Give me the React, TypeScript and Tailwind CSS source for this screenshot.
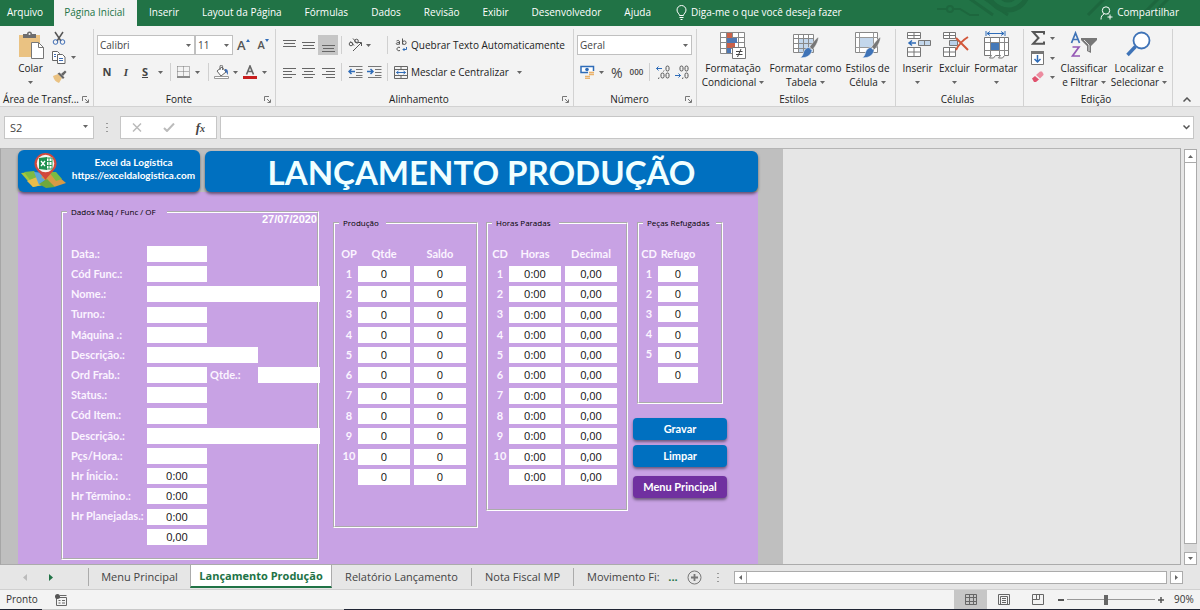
import type { ReactNode } from "react";

const Caret = ({ className = "" }: { className?: string }) => (
  <svg className={`h-[3px] w-[5px] shrink-0 ${className}`} viewBox="0 0 5 3" fill="#666">
    <path d="M0 0h5L2.5 3z" />
  </svg>
);

const Divider = () => <span className="h-[18px] w-px shrink-0 bg-[#d0d0d0]" />;

/* ---------- Title bar ---------- */

const menuTabs = [
  "Arquivo",
  "Página Inicial",
  "Inserir",
  "Layout da Página",
  "Fórmulas",
  "Dados",
  "Revisão",
  "Exibir",
  "Desenvolvedor",
  "Ajuda",
];

const MenuBar = () => (
  <header className="relative flex h-[26px] shrink-0 items-stretch overflow-hidden bg-[#217346] text-[10px] text-white">
    <svg
      className="absolute top-0 right-0 h-[26px] w-[270px]"
      viewBox="0 0 270 26"
      fill="none"
      stroke="#1d673e"
      strokeWidth="3"
    >
      <path d="M7 9h9M24 9h6l10 6h9" strokeWidth="2" />
      <circle cx="20" cy="9" r="3" strokeWidth="2" />
      <path d="M33 -6l30 21M48 -6l30 21" />
      <circle cx="78" cy="-10" r="20" strokeWidth="5" />
      <circle cx="78" cy="-8" r="9" />
      <path d="M158 15l20-20M212 15l20-20M222 15l20-20" />
    </svg>
    <nav className="relative flex">
      {menuTabs.map((tab, i) => (
        <button
          key={tab}
          className={
            i === 0
              ? "w-[54px] pr-1 pb-px text-center"
              : i === 1
                ? "w-[83px] bg-[#f3f3f3] pr-[2px] pb-px text-center text-[#217346]"
                : "pr-[11px] pb-px pl-3"
          }
        >
          {tab}
        </button>
      ))}
    </nav>
    <button className="relative ml-[14px] flex items-center gap-1 pb-px">
      <svg className="h-[15px] w-[11px]" viewBox="0 0 11 15" fill="none" stroke="#fff">
        <path d="M3.5 10.5C3.5 8.5 1 8 1 5a4.5 4.5 0 0 1 9 0c0 3-2.500 3.500-2.500 5.500zM3.500 12.500h4M4.500 14.500h2" />
      </svg>
      Diga-me o que você deseja fazer
    </button>
    <button className="relative mr-[21px] ml-auto flex items-center gap-1 pb-px">
      <svg className="h-[14px] w-[13px]" viewBox="0 0 13 14" fill="none" stroke="#fff">
        <circle cx="6" cy="4.500" r="3.700" />
        <path d="M1 13.500c0-3 1-4.500 3-5.500M8 8.500l.5.500M7.500 11h5M10 8.500v5" />
      </svg>
      Compartilhar
    </button>
  </header>
);

/* ---------- Ribbon icons ---------- */

const PasteIcon = () => (
  <svg className="h-7 w-7" viewBox="0 0 28 28">
    <path d="M2 4h21v22H2z" fill="#eac282" />
    <path d="M6 3h4a2.500 2.500 0 0 1 5 0h4v4H6z" fill="#6d6d6d" />
    <circle cx="12.500" cy="3" r="1" fill="#f3f3f3" />
    <path d="M14.500 11.500h7l5 5v11h-12z" fill="#fff" stroke="#777" />
    <path d="M21.500 11.500v5h5" fill="none" stroke="#777" />
  </svg>
);

const CutIcon = () => (
  <svg className="h-[14px] w-[14px]" viewBox="0 0 14 14" fill="none">
    <path d="M3 1l6 9M11 1L5 10" stroke="#555" strokeWidth="1.500" />
    <circle cx="3.500" cy="11" r="2.300" stroke="#3e6db5" />
    <circle cx="10.500" cy="11" r="2.300" stroke="#3e6db5" />
  </svg>
);

const CopyIcon = () => (
  <svg className="h-[13px] w-[14px]" viewBox="0 0 14 13" fill="#fff" stroke="#666">
    <path d="M.5.500h5l2 2v7h-7z" />
    <path d="M5.500 3.500h5l2.500 2.500v6.500H5.500z" />
    <path d="M2 3.500h2M2 5.500h2M7 7.500h4M7 9.500h4" stroke="#3e6db5" />
  </svg>
);

const BrushIcon = () => (
  <svg className="h-[13px] w-[15px]" viewBox="0 0 15 13">
    <path d="M1 6l5-2 4 4-3 5c-3-1-5-3-6-7z" fill="#eac282" />
    <path d="M5.500 3.500l2-1 5 5-1.500 1.500z" fill="#666" />
    <path d="M9 4l4-3.500L14.500 2 11 6z" fill="#666" />
  </svg>
);

const BordersIcon = () => (
  <svg className="h-3 w-[13px]" viewBox="0 0 13 12" fill="none" stroke="#777">
    <path d="M.5.500h12M.5 5.500h12M.5.500v10M6.500.500v10M12.500.500v10" strokeDasharray="1 1" />
    <path d="M0 11h13" stroke="#666" strokeWidth="1.500" />
  </svg>
);

const FillIcon = () => (
  <svg className="h-[14px] w-[15px]" viewBox="0 0 15 14">
    <path d="M3 6l5-4 4 5-5 4z" fill="#fff" stroke="#666" />
    <path d="M6 5V1.500a1.300 1.300 0 0 1 2.600 0V5" fill="none" stroke="#666" />
    <path d="M11 4c3 0 3 2 3 6-1-1-1.500-3-3-3.500z" fill="#3e6db5" />
    <path d="M.5 11.500h14v2H.5z" fill="#fff" stroke="#999" />
  </svg>
);

const FontColorIcon = () => (
  <svg className="h-[14px] w-[14px]" viewBox="0 0 14 14">
    <path d="M3.500 9.500L7 1l3.500 8.500M4.800 6.500h4.400" fill="none" stroke="#666" strokeWidth="1.600" />
    <path d="M0 11h14v3H0z" fill="#c81e1e" />
  </svg>
);

const LinesIcon = ({ rows }: { rows: string }) => (
  <svg className="h-[13px] w-[13px]" viewBox="0 0 13 13" stroke="#666" fill="none">
    <path d={rows} />
  </svg>
);

const OrientationIcon = () => (
  <svg className="h-[14px] w-[15px]" viewBox="0 0 15 14" fill="none" stroke="#555">
    <circle cx="3" cy="6" r="1.800" />
    <path d="M2.500 3.500l3.500 4M5 .5l4.500 5" />
    <circle cx="8.500" cy="3" r="1.800" />
    <path d="M5 13l8-8M10 4.500h3.500V8" />
  </svg>
);

const IndentIcon = ({ right = false }: { right?: boolean }) => (
  <svg className="h-3 w-[15px]" viewBox="0 0 15 12" fill="none">
    <path d="M1 .5h13.500M8 3.500h6.500M8 6.500h6.500M8 9.500h6.500M1 11.500h13.500" stroke="#777" />
    <path
      d={right ? "M0 5.500h6M3.500 3L6 5.500 3.500 8" : "M1 5.500h6M3.500 3L1 5.500 3.500 8"}
      stroke="#2f6cb8"
      strokeWidth="1.500"
    />
  </svg>
);

const WrapIcon = () => (
  <svg className="h-[14px] w-[13px]" viewBox="0 0 13 14" fill="none" stroke="#555">
    <path d="M1.500 3c2-1 3-.5 3 1v2.500M4.500 4.500c-4 0-4 2-2 2 1 0 2-.5 2-1.500M7.500.500v6" />
    <circle cx="9.300" cy="4.700" r="1.800" />
    <path d="M5 9.500c-4-1.500-4 4.500 0 3" />
    <path d="M11.500 9v2.500H8M9.500 10L8 11.500 9.500 13" stroke="#2f6cb8" />
  </svg>
);

const MergeIcon = () => (
  <svg className="h-[13px] w-[14px]" viewBox="0 0 14 13" fill="none">
    <path d="M.5.500h13v12H.5zM.5 3.500h13M.5 9.500h13M7 .5v3M7 9.500v3" stroke="#666" />
    <path d="M2.500 6.500h9M4.500 5L2.500 6.500 4.500 8M9.500 5l2 1.500-2 1.500" stroke="#2f6cb8" />
  </svg>
);

const MoneyIcon = () => (
  <svg className="h-[14px] w-[15px]" viewBox="0 0 15 14">
    <path d="M1 1.500h12.500v6H1z" fill="#fff" stroke="#2f6cb8" strokeWidth="1.500" />
    <circle cx="7" cy="4.500" r="1.800" fill="#2f6cb8" />
    <path d="M8 6h7v8H4v-4h4z" fill="#f3f3f3" />
    <path d="M9 7.500h5M9 9.500h5M5 11.500h5M5 13.500h5" stroke="#eab26c" strokeWidth="1.300" />
  </svg>
);

const DecimalIcon = ({ less = false }: { less?: boolean }) => (
  <svg className="h-[14px] w-[14px]" viewBox="0 0 14 14" fill="none" stroke="#555">
    {less ? (
      <>
        <rect x="5" y="1" width="3" height="5" rx="1.500" />
        <rect x="10" y="1" width="3" height="5" rx="1.500" />
        <rect x="10" y="8" width="3" height="5" rx="1.500" />
        <path d="M8 12.500l-.5 1.500" />
        <path d="M0 10.500h5.500M3.500 8.500l2 2-2 2" stroke="#2f6cb8" />
      </>
    ) : (
      <>
        <rect x="10" y="1" width="3" height="5" rx="1.500" />
        <rect x="5" y="8" width="3" height="5" rx="1.500" />
        <rect x="10" y="8" width="3" height="5" rx="1.500" />
        <path d="M3 12.500l-.5 1.500M8 5.500l-.5 1" />
        <path d="M.5 3.500H6M2.500 1.500l-2 2 2 2" stroke="#2f6cb8" />
      </>
    )}
  </svg>
);

const CondFormatIcon = () => (
  <svg className="h-7 w-7" viewBox="0 0 28 28">
    <path d="M1.500 1.500h24v21h-24z" fill="#fff" />
    <path d="M1.500 1.500h24v21h-24zM7.500 1.500v21M13.500 1.500v21M19.500 1.500v21M1.500 6.500h24M1.500 11.500h24M1.500 17.500h24" fill="none" stroke="#888" />
    <path d="M8 2h5v5H8zM8 12h8v5H8z" fill="#c9614a" />
    <path d="M8 7h10v5H8zM8 17h4v5H8z" fill="#4f78b3" />
    <path d="M13.500 16.500h13v11h-13z" fill="#fff" stroke="#777" />
    <path d="M17 20.500h6.500M17 23.500h6.500M22 18l-3.500 8" stroke="#444" fill="none" />
  </svg>
);

const PaintBrush = () => (
  <>
    <path d="M26.500 6c-2 1-7 7-9 10l3 2.500c3-3 6-8 6-12.500z" fill="#777" stroke="#fff" strokeWidth=".5" />
    <path d="M17 16.500l3 3c-1 5-6 8-12 7 3-1 3-4 4-6.500 1-2 3-3.500 5-3.500z" fill="#3f73b7" stroke="#fff" strokeWidth=".5" />
  </>
);

const TableFormatIcon = () => (
  <svg className="h-7 w-7" viewBox="0 0 28 28">
    <path d="M1.500 3.500h20v18h-20z" fill="#fff" />
    <path d="M6 8h15.500v13.500H6z" fill="#c3d7ec" />
    <path d="M1.500 3.500h20v18h-20zM6.500 3.500v18M11.500 3.500v18M16.500 3.500v18M1.500 7.500h20M1.500 12.500h20M1.500 17.500h20" fill="none" stroke="#888" />
    <PaintBrush />
  </svg>
);

const CellStyleIcon = () => (
  <svg className="h-7 w-7" viewBox="0 0 28 28">
    <path d="M1.500 1.500h22v20h-22z" fill="#fff" stroke="#888" />
    <path d="M6 7h13v9H6z" fill="#c3d7ec" />
    <path d="M5.500 1.500v20M19.500 1.500v20M1.500 6.500h22M1.500 16.500h22" fill="none" stroke="#999" />
    <PaintBrush />
  </svg>
);

const InsertCellsIcon = () => (
  <svg className="h-7 w-7" viewBox="0 0 28 28" fill="#fff" stroke="#777">
    <path d="M3.500 1.500h13v6h-13zM3.500 4.500h13M10 1.500v6M3.500 16.500h13v9h-13zM3.500 21h13M10 16.500v9" />
    <path d="M14.500 9.500h12v5h-12zM20.500 9.500v5" fill="#c3d7ec" />
    <path d="M5 12h7M8 9.500L5 12l3 2.500" fill="none" stroke="#2f6cb8" strokeWidth="1.500" />
  </svg>
);

const DeleteCellsIcon = () => (
  <svg className="h-7 w-7" viewBox="0 0 28 28" fill="#fff" stroke="#777">
    <path d="M2.500 1.500h12v6h-12zM2.500 4.500h12M8.500 1.500v6M2.500 16.500h12v9h-12zM2.500 21h12M8.500 16.500v9" />
    <path d="M8.500 9.500h8v5h-8z" fill="#b9d0ea" />
    <path d="M15 7l12 12M27 6c-5 3-9 7-12 13" fill="none" stroke="#d2573a" strokeWidth="2" />
  </svg>
);

const FormatCellsIcon = () => (
  <svg className="h-7 w-7" viewBox="0 0 28 28" fill="none">
    <path d="M4 0v5M23 0v5M5 2.500h17M8 .5l-3 2 3 2M19 .5l3 2-3 2" stroke="#2f6cb8" />
    <path d="M2.500 6.500h24v18l-4 0-2 2.500h-4l2-2.500h-5l-2 2.500h-4l2-2.500h-7z" fill="#fff" stroke="#777" />
    <path d="M8.500 6.500v18M17.500 6.500v18M22.500 6.500v18M2.500 11.500h24M2.500 19.500h24" stroke="#888" />
    <path d="M9 12h8v7H9z" fill="#4579b8" />
  </svg>
);

const SumIcon = () => (
  <svg className="h-[14px] w-[14px]" viewBox="0 0 14 14" fill="none" stroke="#555" strokeWidth="2">
    <path d="M13 3.500V1H2l5.500 6L2 12.800h11V10.500" />
  </svg>
);

const FillDownIcon = () => (
  <svg className="h-[14px] w-[14px]" viewBox="0 0 14 14" fill="none">
    <path d="M.5.500h12v13H.5z" fill="#fff" stroke="#777" />
    <path d="M0 0h13v3H0z" fill="#777" />
    <path d="M6.500 4v7M3.500 8l3 3 3-3" stroke="#2f6cb8" strokeWidth="1.500" />
  </svg>
);

const EraserIcon = () => (
  <svg className="h-3 w-[13px]" viewBox="0 0 13 12">
    <path d="M1 7.500l3-2.500 4 3.500-3 2.500H3z" fill="#e0526e" />
    <path d="M5 4l4-3.500h2l1.500 2.500v1L9 7.500z" fill="#ec8b9f" />
  </svg>
);

const SortIcon = () => (
  <svg className="h-7 w-7" viewBox="0 0 28 28" fill="none">
    <path d="M1.500 12L5.500 2l4 10M3 8.500h5" stroke="#3f73b7" strokeWidth="1.700" />
    <path d="M2.500 16h6.500L2.500 25H10" stroke="#9558b5" strokeWidth="1.700" />
    <path d="M11 7h16v2l-6 6v7l-4-2v-5l-6-6z" fill="#777" />
    <path d="M14 9l5 5v6" stroke="#ddd" />
  </svg>
);

const FindIcon = () => (
  <svg className="h-7 w-7" viewBox="0 0 28 28" fill="none">
    <circle cx="16.500" cy="9.500" r="8" fill="#fff" stroke="#3f73b7" strokeWidth="1.800" />
    <path d="M10.500 15.500L2.500 24" stroke="#3f73b7" strokeWidth="3.500" />
  </svg>
);

const LaunchIcon = () => (
  <svg className="h-[7px] w-[7px]" viewBox="0 0 7 7" fill="none" stroke="#777">
    <path d="M.5 5V.5H5M3 3l3 3M6.500 3.500v3h-3" />
  </svg>
);

/* ---------- Ribbon ---------- */

type GroupProps = {
  label: string;
  className: string;
  launcher?: boolean;
  children: ReactNode;
};

const Group = ({ label, className, launcher, children }: GroupProps) => (
  <section className={`flex shrink-0 flex-col border-r border-[#d2d2d2] pb-px ${className}`}>
    <div className="flex-1">{children}</div>
    <div className="flex h-3 items-center pr-1">
      <span className="flex-1 text-center leading-3 whitespace-nowrap">{label}</span>
      {launcher && (
        <button aria-label={`Opções de ${label}`}>
          <LaunchIcon />
        </button>
      )}
    </div>
  </section>
);

type BigButtonProps = {
  icon: ReactNode;
  lines: string[];
  className: string;
};

const BigButton = ({ icon, lines, className }: BigButtonProps) => (
  <button className={`flex shrink-0 flex-col items-center pt-[2px] leading-[14px] whitespace-nowrap ${className}`}>
    {icon}
    <span className="mt-[2px]">{lines[0]}</span>
    <span className="flex h-[14px] items-center gap-[3px]">
      {lines[1]}
      <Caret />
    </span>
  </button>
);

const Dropdown = ({ label, value, className }: { label: string; value: string; className: string }) => (
  <div className={`relative ${className}`}>
    <select
      aria-label={label}
      className="h-5 w-full appearance-none border border-[#c0c0c0] bg-white pl-[2px] leading-4 text-[#444]"
    >
      <option>{value}</option>
    </select>
    <Caret className="pointer-events-none absolute top-[9px] right-1" />
  </div>
);

const Ribbon = () => (
  <div className="flex h-[81px] shrink-0 overflow-hidden border-b border-[#d2d2d2] bg-[#f3f3f3] pt-[3px] text-[10px] text-[#222]">
    <Group label="Área de Transf..." className="w-[94px]" launcher>
      <div className="flex">
        <BigButton icon={<PasteIcon />} lines={["Colar"]} className="ml-3 w-[37px]" />
        <div className="flex flex-col gap-[6px] pt-[2px] pl-[3px]">
          <button aria-label="Recortar">
            <CutIcon />
          </button>
          <button aria-label="Copiar" className="flex items-center gap-[5px]">
            <CopyIcon />
            <Caret />
          </button>
          <button aria-label="Pincel de Formatação">
            <BrushIcon />
          </button>
        </div>
      </div>
    </Group>

    <Group label="Fonte" className="w-[182px]" launcher>
      <div className="flex flex-col gap-[7px] pt-[6px] pl-[3px]">
        <div className="flex items-center">
          <Dropdown label="Fonte" value="Calibri" className="w-[98px]" />
          <Dropdown label="Tamanho" value="11" className="w-[38px]" />
          <button aria-label="Aumentar fonte" className="relative ml-1 text-[13px] leading-5 font-semibold text-[#555]">
            A
            <svg className="absolute top-1 -right-1 h-[3px] w-1" viewBox="0 0 4 3" fill="#2f6cb8">
              <path d="M0 3h4L2 0z" />
            </svg>
          </button>
          <button aria-label="Diminuir fonte" className="relative ml-3 text-[11px] leading-5 font-semibold text-[#555]">
            A
            <svg className="absolute top-1 -right-1 h-[3px] w-1" viewBox="0 0 4 3" fill="#2f6cb8">
              <path d="M0 0h4L2 3z" />
            </svg>
          </button>
        </div>
        <div className="flex h-5 items-center text-[11px] text-[#444]">
          <button className="w-5 font-bold">N</button>
          <button className="w-[18px] font-['Liberation_Serif',serif] font-bold italic">I</button>
          <button className="w-5 font-bold underline">S</button>
          <Caret className="mr-[7px] ml-[3px]" />
          <Divider />
          <button aria-label="Bordas" className="mr-2 ml-[6px] flex items-center gap-[5px]">
            <BordersIcon />
            <Caret />
          </button>
          <Divider />
          <button aria-label="Cor de preenchimento" className="ml-[5px] flex items-center gap-1">
            <FillIcon />
            <Caret />
          </button>
          <button aria-label="Cor da fonte" className="ml-[5px] flex items-center gap-[5px]">
            <FontColorIcon />
            <Caret />
          </button>
        </div>
      </div>
    </Group>

    <Group label="Alinhamento" className="w-[298px]" launcher>
      <div className="flex flex-col gap-[7px] pt-[6px] pl-1">
        <div className="flex h-5 items-center">
          <button aria-label="Alinhar em cima" className="flex w-[19px] justify-center">
            <LinesIcon rows="M0 1.500h13M1 4.500h11M0 7.500h13" />
          </button>
          <button aria-label="Alinhar no meio" className="flex w-[19px] justify-center">
            <LinesIcon rows="M0 3.500h13M1 6.500h11M0 9.500h13" />
          </button>
          <button aria-label="Alinhar embaixo" className="flex h-5 w-5 items-center justify-center bg-[#c6c6c6]">
            <LinesIcon rows="M0 6.500h13M1 9.500h11M0 12.500h13" />
          </button>
          <span className="w-[3px]" />
          <Divider />
          <button aria-label="Orientação" className="ml-[6px] flex items-center gap-[3px]">
            <OrientationIcon />
            <Caret />
          </button>
          <span className="w-4" />
          <Divider />
          <button className="ml-[7px] flex items-center gap-[3px] whitespace-nowrap">
            <WrapIcon />
            Quebrar Texto Automaticamente
          </button>
        </div>
        <div className="flex h-5 items-center">
          <button aria-label="Alinhar à esquerda" className="flex w-[19px] justify-center">
            <LinesIcon rows="M0 2.500h13M0 5.500h9M0 8.500h13M0 11.500h9" />
          </button>
          <button aria-label="Centralizar" className="flex w-[19px] justify-center">
            <LinesIcon rows="M0 2.500h13M2 5.500h9M0 8.500h13M2 11.500h9" />
          </button>
          <button aria-label="Alinhar à direita" className="flex w-5 justify-center">
            <LinesIcon rows="M0 2.500h13M4 5.500h9M0 8.500h13M4 11.500h9" />
          </button>
          <span className="w-[3px]" />
          <Divider />
          <button aria-label="Diminuir recuo" className="ml-[6px]">
            <IndentIcon />
          </button>
          <button aria-label="Aumentar recuo" className="ml-1">
            <IndentIcon right />
          </button>
          <span className="w-[5px]" />
          <Divider />
          <button className="ml-[6px] flex items-center gap-[3px] whitespace-nowrap">
            <MergeIcon />
            Mesclar e Centralizar
            <Caret className="ml-[5px]" />
          </button>
        </div>
      </div>
    </Group>

    <Group label="Número" className="w-[123px]" launcher>
      <div className="flex flex-col gap-[7px] pt-[6px] pl-[3px]">
        <Dropdown label="Formato de número" value="Geral" className="w-[115px]" />
        <div className="flex h-5 items-center pl-[3px]">
          <button aria-label="Formato de contabilização" className="flex items-center gap-1">
            <MoneyIcon />
            <Caret />
          </button>
          <button className="ml-[7px] text-[14px] text-[#444]">%</button>
          <button className="ml-[7px] text-[8px] font-semibold text-[#444]">000</button>
          <span className="w-[6px]" />
          <Divider />
          <button aria-label="Aumentar casas decimais" className="ml-[6px]">
            <DecimalIcon />
          </button>
          <button aria-label="Diminuir casas decimais" className="ml-[5px]">
            <DecimalIcon less />
          </button>
        </div>
      </div>
    </Group>

    <Group label="Estilos" className="w-[199px]">
      <div className="flex pl-[2px]">
        <BigButton icon={<CondFormatIcon />} lines={["Formatação", "Condicional"]} className="w-[68px]" />
        <BigButton icon={<TableFormatIcon />} lines={["Formatar como", "Tabela"]} className="w-[77px]" />
        <BigButton icon={<CellStyleIcon />} lines={["Estilos de", "Célula"]} className="w-[47px]" />
      </div>
    </Group>

    <Group label="Células" className="w-[128px]">
      <div className="flex pl-[3px]">
        <BigButton icon={<InsertCellsIcon />} lines={["Inserir"]} className="w-[37px]" />
        <BigButton icon={<DeleteCellsIcon />} lines={["Excluir"]} className="w-[37px]" />
        <BigButton icon={<FormatCellsIcon />} lines={["Formatar"]} className="w-[46px]" />
      </div>
    </Group>

    <Group label="Edição" className="w-[149px]">
      <div className="flex pl-[7px]">
        <div className="flex flex-col gap-[6px] pt-[2px]">
          <button aria-label="Soma" className="flex items-center gap-[5px]">
            <SumIcon />
            <Caret />
          </button>
          <button aria-label="Preencher" className="flex items-center gap-[5px]">
            <FillDownIcon />
            <Caret />
          </button>
          <button aria-label="Limpar formatos" className="flex items-center gap-[6px]">
            <EraserIcon />
            <Caret />
          </button>
        </div>
        <BigButton icon={<SortIcon />} lines={["Classificar", "e Filtrar"]} className="ml-1 w-[50px]" />
        <BigButton icon={<FindIcon />} lines={["Localizar e", "Selecionar"]} className="ml-px w-[58px]" />
      </div>
    </Group>

    <button aria-label="Recolher a faixa" className="mt-auto mr-[9px] mb-1 ml-auto">
      <svg className="h-[5px] w-2" viewBox="0 0 8 5" fill="none" stroke="#555" strokeWidth="1.500">
        <path d="M.5 4.500L4 1l3.500 3.500" />
      </svg>
    </button>
  </div>
);

/* ---------- Formula bar ---------- */

const DotsHandle = () => (
  <svg className="h-[9px] w-[2px] shrink-0" viewBox="0 0 2 9" fill="#999">
    <path d="M0 0h2v1H0zM0 4h2v1H0zM0 8h2v1H0z" />
  </svg>
);

const FormulaBar = () => (
  <div className="flex h-[41px] shrink-0 items-center bg-[#e6e6e6] pr-[6px] pl-1 text-[11px] text-[#444]">
    <div className="relative w-[90px]">
      <input
        aria-label="Caixa de nome"
        defaultValue="S2"
        className="h-[23px] w-full border border-[#c6c6c6] bg-white pl-[5px]"
      />
      <Caret className="absolute top-[9px] right-[6px]" />
    </div>
    <span className="flex w-[26px] justify-center">
      <DotsHandle />
    </span>
    <div className="flex h-[23px] w-[97px] items-center justify-between border border-[#c6c6c6] bg-white px-[11px]">
      <button aria-label="Cancelar">
        <svg className="h-[9px] w-[10px]" viewBox="0 0 10 9" fill="none" stroke="#bbb" strokeWidth="1.500">
          <path d="M1 .5l8 8M9 .5l-8 8" />
        </svg>
      </button>
      <button aria-label="Inserir">
        <svg className="h-[9px] w-3" viewBox="0 0 12 9" fill="none" stroke="#bbb" strokeWidth="2">
          <path d="M1 5l3 3 7-7.500" />
        </svg>
      </button>
      <button className="font-['Liberation_Serif',serif] text-[13px] font-bold italic">
        f<span className="text-[10px]">x</span>
      </button>
    </div>
    <div className="relative ml-[3px] flex-1">
      <input aria-label="Barra de fórmulas" className="h-[23px] w-full border border-[#c6c6c6] bg-white px-2" />
      <svg
        className="absolute top-[9px] right-1 h-[5px] w-[7px]"
        viewBox="0 0 7 5"
        fill="none"
        stroke="#555"
        strokeWidth="1.500"
      >
        <path d="M.5.500l3 3 3-3" />
      </svg>
    </div>
  </div>
);

/* ---------- Worksheet ---------- */

const LogoIcon = () => (
  <svg className="h-9 w-[46px] shrink-0" viewBox="0 0 46 36">
    <path d="M0 20l13-1 9 13-10 2z" fill="#a8c63c" />
    <path d="M3 19l10-1 5 6-9 3z" fill="#7dbb42" />
    <path d="M6 28l10-4 5 8-9 2z" fill="#e8bc4a" />
    <path d="M13 19l10 1 4 5-9 7z" fill="#5aa7d8" />
    <path d="M20 24l12-5 13 11-12 4z" fill="#d89a45" />
    <path d="M28 19l7 0 6 7-6 2z" fill="#7dbb42" />
    <path d="M18 31l8-5 8 8-9 1z" fill="#6fa83b" />
    <path d="M24.500 27C20 20 13.500 17 13.500 11a11 11 0 0 1 22 0c0 6-6.500 9-11 16z" fill="#d2483c" />
    <circle cx="24.500" cy="10.500" r="8.700" fill="#f5f5f0" />
    <path d="M25 5h6v11h-6z" fill="#fff" stroke="#2e9e58" />
    <path d="M28 5v11M25 8.500h6M25 12.500h6" stroke="#2e9e58" />
    <path d="M18 5l8-1v13l-8-1z" fill="#1f9150" />
    <path d="M20 8l4 5M24 8l-4 5" stroke="#fff" strokeWidth="1.300" />
  </svg>
);

type Field = {
  id: string;
  label: string;
  size: "sm" | "md" | "lg";
  value?: string;
};

const fields: Field[] = [
  { id: "data", label: "Data.:", size: "sm" },
  { id: "cod-func", label: "Cód Func.:", size: "sm" },
  { id: "nome", label: "Nome.:", size: "lg" },
  { id: "turno", label: "Turno.:", size: "sm" },
  { id: "maquina", label: "Máquina .:", size: "sm" },
  { id: "descricao", label: "Descrição.:", size: "md" },
  { id: "ord-fab", label: "Ord Frab.:", size: "sm" },
  { id: "status", label: "Status.:", size: "sm" },
  { id: "cod-item", label: "Cód Item.:", size: "sm" },
  { id: "descricao-item", label: "Descrição.:", size: "lg" },
  { id: "pcs-hora", label: "Pçs/Hora.:", size: "sm" },
  { id: "hr-inicio", label: "Hr Ínicio.:", size: "sm", value: "0:00" },
  { id: "hr-termino", label: "Hr Término.:", size: "sm", value: "0:00" },
  { id: "hr-planejadas", label: "Hr Planejadas.:", size: "sm", value: "0:00" },
  { id: "total", label: "", size: "sm", value: "0,00" },
];

const fieldWidth = {
  sm: "w-[60px]",
  md: "w-[111px]",
  lg: "w-[173px]",
};

const inputStyle = "h-4 bg-white text-center text-[11px] leading-4 text-[#111]";
const sheetLabel = "font-['Lato',sans-serif] text-[11px] font-bold text-[#fbf4ff]";
const frame = "min-w-0 shrink-0 border-2 border-white [border-style:groove]";
const legendStyle = "ml-1 pl-1 text-[8px] leading-[10px] whitespace-nowrap text-black";

const MachineData = () => (
  <fieldset className={`h-[353px] w-[258px] ${frame}`}>
    <legend className={`${legendStyle} pr-[11px]`}>Dados Màq / Func / OF</legend>
    <p className="-mt-1 text-right font-['Liberation_Sans',sans-serif] text-[11px] leading-3 font-bold text-white">
      27/07/2020
    </p>
    <div className="mt-[19px] grid h-[303px] auto-rows-fr pl-2">
      {fields.map((field) => (
        <div key={field.id} className="flex items-center">
          <label htmlFor={field.id} className={`w-[76px] shrink-0 whitespace-nowrap ${sheetLabel}`}>
            {field.label}
          </label>
          <input
            id={field.id}
            aria-label={field.label ? undefined : "Total de horas"}
            defaultValue={field.value}
            className={`shrink-0 ${inputStyle} ${fieldWidth[field.size]}`}
          />
          {field.id === "ord-fab" && (
            <>
              <label htmlFor="qtde" className={`w-[51px] shrink-0 pl-[3px] ${sheetLabel}`}>
                Qtde.:
              </label>
              <input id="qtde" className={`w-[62px] shrink-0 ${inputStyle}`} />
            </>
          )}
        </div>
      ))}
    </div>
  </fieldset>
);

type EntryTableProps = {
  title: string;
  columns: string[];
  rows: number;
  numbered: number;
  values: string[];
  className: string;
  legendClass: string;
  tableClass: string;
  cellClass: string;
};

const EntryTable = ({
  title,
  columns,
  rows,
  numbered,
  values,
  className,
  legendClass,
  tableClass,
  cellClass,
}: EntryTableProps) => (
  <fieldset className={`${className} ${frame}`}>
    <legend className={`${legendStyle} ${legendClass}`}>{title}</legend>
    <table className={`mt-4 table-fixed border-collapse ${tableClass}`}>
      <thead>
        <tr className="h-5">
          {columns.map((column, i) => (
            <th key={column} className={`p-0 text-center ${sheetLabel} ${i === 0 ? "w-[14px]" : cellClass}`}>
              <span className="flex justify-center">{column}</span>
            </th>
          ))}
        </tr>
      </thead>
      <tbody>
        {Array.from({ length: rows }, (_, row) => (
          <tr key={row} className="h-5">
            <th className={`p-0 ${sheetLabel}`}>
              <span className="flex justify-center">{row < numbered ? row + 1 : ""}</span>
            </th>
            {values.map((value, i) => (
              <td key={i} className="px-[2px] py-0">
                <div className={inputStyle}>{value}</div>
              </td>
            ))}
          </tr>
        ))}
      </tbody>
    </table>
  </fieldset>
);

const actionButton =
  "h-[22px] w-full rounded font-['Lato',sans-serif] text-[11px] font-bold text-white shadow-[0_2px_3px_rgba(0,0,0,0.45)]";

const Worksheet = () => (
  <main className="flex min-h-0 flex-1 bg-[#e6e6e6]">
    <div className="flex flex-1 overflow-hidden border border-l-[#a6a6a6] border-t-[#b5b5b5] border-r-[#ababab] border-b-[#ababab]">
      <div className="flex w-[782px] shrink-0 flex-col bg-[#bfbfbf] pr-[25px] pl-[17px]">
        <div className="flex gap-[5px] pt-px">
          <a
            href="https://exceldalogistica.com"
            className="relative z-10 flex h-[42px] w-[182px] shrink-0 items-center rounded-md bg-[#0070c0] pl-[3px] shadow-[0_2px_3px_rgba(0,0,0,0.5)]"
          >
            <LogoIcon />
            <span className="flex-1 pb-1 text-center font-['Lato',sans-serif] text-[10px] leading-[13px] font-bold text-white">
              Excel da Logística
              <br />
              https://exceldalogistica.com
            </span>
          </a>
          <h1 className="relative z-10 mt-px flex h-[41px] flex-1 items-center justify-center rounded-md bg-[#0070c0] font-['Lato',sans-serif] text-[33px] leading-10 font-bold whitespace-nowrap text-[#f0ffff] shadow-[0_2px_3px_rgba(0,0,0,0.5)]">
            LANÇAMENTO PRODUÇÃO
          </h1>
        </div>

        <div className="flex flex-1 items-start bg-[#c8a2e4] pt-[15px] pl-[43px]">
          <MachineData />
          <div className="mt-[11px] ml-[14px] flex items-start gap-2">
            <EntryTable
              title="Produção"
              columns={["OP", "Qtde", "Saldo"]}
              rows={11}
              numbered={10}
              values={["0", "0"]}
              className="h-[310px] w-[145px]"
              legendClass="pr-[7px]"
              tableClass="ml-[7px] h-[243px] w-[126px]"
              cellClass="w-[56px]"
            />
            <EntryTable
              title="Horas Paradas"
              columns={["CD", "Horas", "Decimal"]}
              rows={11}
              numbered={10}
              values={["0:00", "0,00"]}
              className="h-[293px] w-[142px]"
              legendClass="pr-[9px]"
              tableClass="ml-[5px] h-[243px] w-[126px]"
              cellClass="w-[56px]"
            />
          </div>
          <div className="mt-[11px] ml-[5px] flex w-[94px] flex-col">
            <EntryTable
              title="Peças Refugadas"
              columns={["CD", "Refugo"]}
              rows={6}
              numbered={5}
              values={["0"]}
              className="ml-1 h-[186px] w-[86px]"
              legendClass="pr-[7px]"
              tableClass="ml-[3px] h-[141px] w-[58px]"
              cellClass="w-[44px]"
            />
            <button className={`mt-[14px] bg-[#0070c0] ${actionButton}`}>Gravar</button>
            <button className={`mt-[5px] bg-[#0070c0] ${actionButton}`}>Limpar</button>
            <button className={`mt-[9px] bg-[#7030a0] ${actionButton}`}>Menu Principal</button>
          </div>
        </div>
      </div>
    </div>

    <div className="mr-[3px] ml-[3px] flex w-[13px] shrink-0 flex-col pt-px">
      <button aria-label="Rolar para cima" className="flex h-[14px] items-center justify-center border border-[#ababab] bg-white">
        <Caret className="rotate-180" />
      </button>
      <div className="h-[381px] border border-t-0 border-[#ababab] bg-white" />
      <div className="flex-1 bg-[#dadada]" />
      <button aria-label="Rolar para baixo" className="flex h-[13px] items-center justify-center border border-[#ababab] bg-white">
        <Caret />
      </button>
    </div>
  </main>
);

/* ---------- Sheet tabs and status bar ---------- */

const SheetTabs = () => (
  <nav className="flex h-6 shrink-0 items-center bg-[#e6e6e6] text-[11px] whitespace-nowrap text-[#444]">
    <button aria-label="Planilha anterior" className="ml-[23px]">
      <svg className="h-[7px] w-1" viewBox="0 0 4 7" fill="#bbb">
        <path d="M4 0v7L0 3.500z" />
      </svg>
    </button>
    <button aria-label="Próxima planilha" className="ml-[22px]">
      <svg className="h-[7px] w-1" viewBox="0 0 4 7" fill="#217346">
        <path d="M0 0v7l4-3.500z" />
      </svg>
    </button>
    <button className="ml-[35px] h-[18px] w-[102px] border-l border-[#ababab]">Menu Principal</button>
    <button className="h-[23px] w-[142px] self-start border-x border-b-2 border-x-[#ababab] border-b-[#217346] bg-white pt-[2px] font-bold text-[#217346]">
      Lançamento Produção
    </button>
    <button className="h-[18px] w-[140px] border-r border-[#ababab]">Relatório Lançamento</button>
    <button className="h-[18px] w-[102px] border-r border-[#ababab]">Nota Fiscal MP</button>
    <button className="w-[87px] pl-[13px] text-left">Movimento Fi:</button>
    <button className="w-6 font-bold text-[#217346]">...</button>
    <button aria-label="Nova planilha" className="ml-[2px]">
      <svg className="h-[15px] w-[15px]" viewBox="0 0 15 15" fill="none" stroke="#777">
        <circle cx="7.500" cy="7.500" r="6.500" />
        <path d="M7.500 4v7M4 7.500h7" strokeWidth="1.800" />
      </svg>
    </button>
    <span className="mx-[15px] flex">
      <DotsHandle />
    </span>
    <button aria-label="Rolar à esquerda" className="flex h-[13px] w-[13px] items-center justify-center border border-[#ababab] bg-white">
      <Caret className="rotate-90" />
    </button>
    <div className="h-[13px] flex-1 border border-l-0 border-[#ababab] bg-white" />
    <button aria-label="Rolar à direita" className="mr-[17px] ml-[3px] flex h-[13px] w-[13px] items-center justify-center border border-[#ababab] bg-white">
      <Caret className="-rotate-90" />
    </button>
  </nav>
);

const StatusBar = () => (
  <footer className="flex h-[20px] shrink-0 items-center border-t border-[#d0d0d0] bg-[#f3f3f3] text-[10px] text-[#333]">
    <span className="ml-[6px]">Pronto</span>
    <svg className="ml-[17px] h-3 w-3" viewBox="0 0 12 12" fill="none" stroke="#666">
      <path d="M1.500 3.500h10v8h-10zM3.500 6.500h2M7 6.500h3M3.500 9h2M7 9h3M5 1.500h6.500" />
      <circle cx="2.500" cy="2.500" r="2.500" fill="#555" stroke="none" />
    </svg>
    <button aria-label="Normal" className="ml-auto flex h-full w-[33px] items-center justify-center bg-[#c6c6c6]">
      <svg className="h-[11px] w-3" viewBox="0 0 12 11" fill="none" stroke="#666">
        <path d="M.5.500h11v10H.5zM.5 3.500h11M.5 7.500h11M4.500.500v10M8.500.500v10" />
      </svg>
    </button>
    <button aria-label="Layout da página" className="flex w-[34px] justify-center">
      <svg className="h-[11px] w-3" viewBox="0 0 12 11" fill="none" stroke="#666">
        <path d="M.5.500h11v10H.5zM2.500 2.500h7v8h-7zM4 4.500h4M4 6.500h4M4 8.500h4" />
      </svg>
    </button>
    <button aria-label="Quebra de página" className="flex w-[33px] justify-center">
      <svg className="h-[11px] w-3" viewBox="0 0 12 11" fill="none" stroke="#666">
        <path d="M.5.500h11v10H.5zM4.500.500v5M7.500.500v5M.5 5.500h7" />
      </svg>
    </button>
    <button aria-label="Diminuir zoom" className="ml-1 h-[2px] w-[6px] bg-[#555]" />
    <input
      type="range"
      aria-label="Zoom"
      min={10}
      max={190}
      defaultValue={90}
      className="mx-[3px] h-3 w-[88px] appearance-none bg-[linear-gradient(#999,#999)] bg-[length:100%_1px] bg-center bg-no-repeat [&::-webkit-slider-thumb]:h-[10px] [&::-webkit-slider-thumb]:w-1 [&::-webkit-slider-thumb]:appearance-none [&::-webkit-slider-thumb]:bg-[#666]"
    />
    <button aria-label="Aumentar zoom">
      <svg className="h-[6px] w-[6px]" viewBox="0 0 6 6" stroke="#555" strokeWidth="1.500">
        <path d="M3 0v6M0 3h6" />
      </svg>
    </button>
    <span className="mr-[6px] ml-[10px] w-5 whitespace-nowrap">90%</span>
  </footer>
);

export default function App() {
  return (
    <div className="flex h-screen flex-col overflow-hidden bg-[#e6e6e6] font-['Open_Sans','Noto_Sans',sans-serif]">
      <MenuBar />
      <Ribbon />
      <FormulaBar />
      <Worksheet />
      <SheetTabs />
      <StatusBar />
      <div className="flex h-px shrink-0 bg-[#1f2433]">
        <span className="ml-[42px] w-[302px] bg-[#c8c8c8]" />
      </div>
    </div>
  );
}
